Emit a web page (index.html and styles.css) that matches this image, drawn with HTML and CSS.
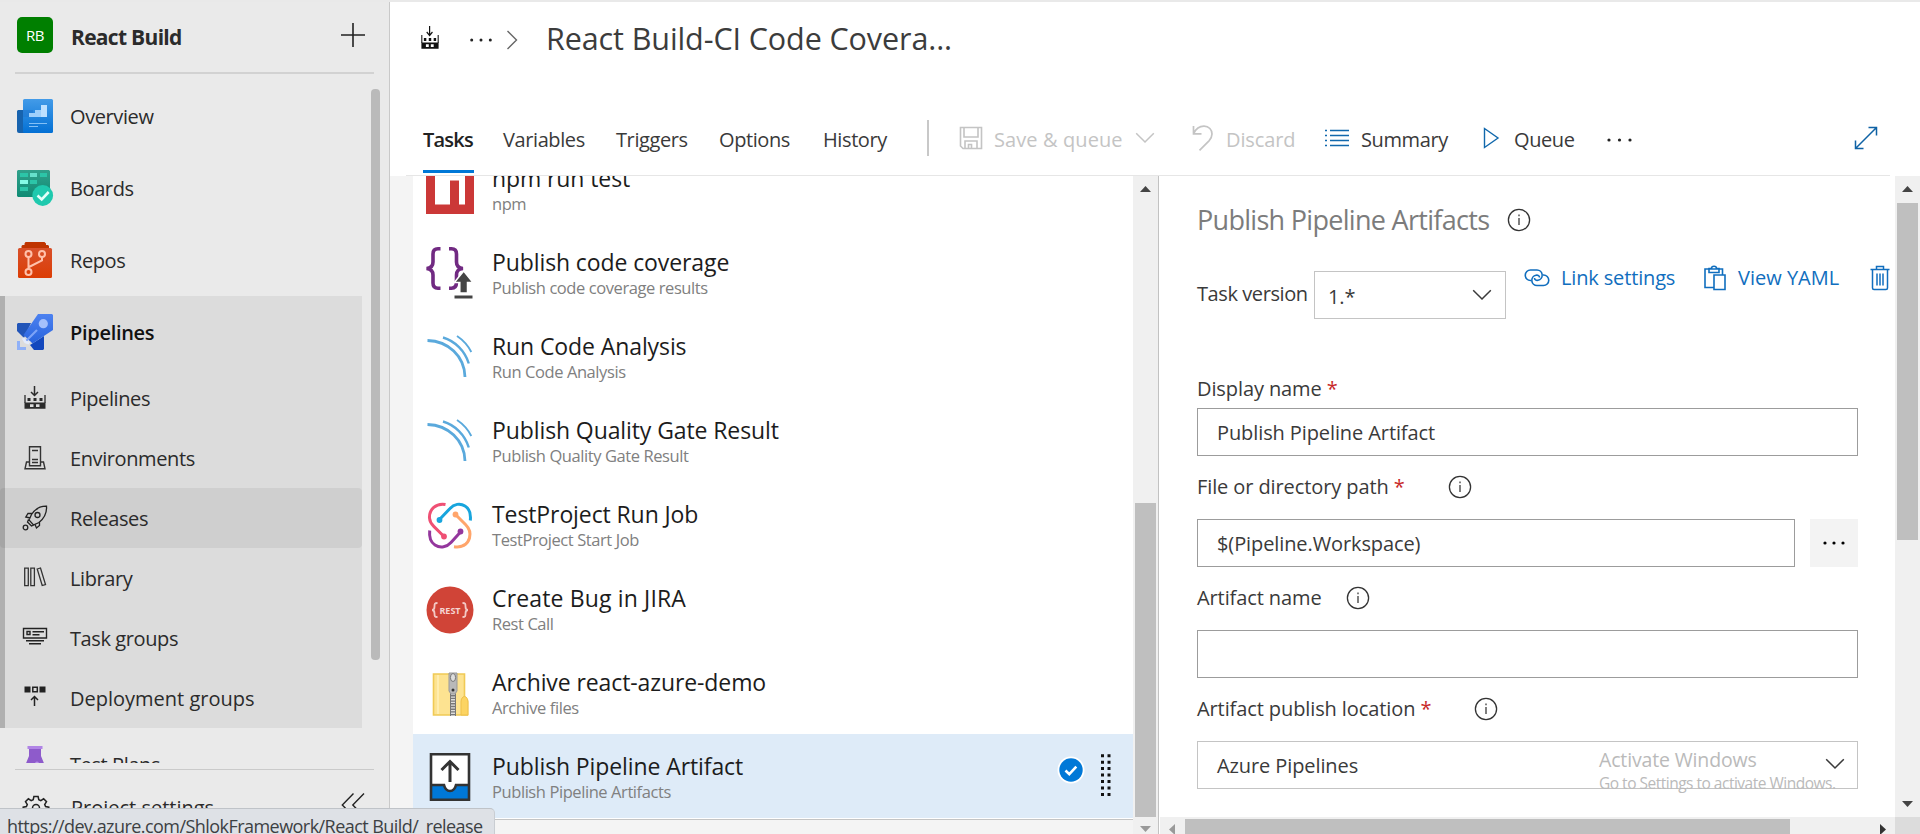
FILE: index.html
```html
<!DOCTYPE html>
<html lang="en">
<head>
<meta charset="utf-8">
<title>React Build - Pipelines</title>
<link rel="stylesheet" href="styles.css">
</head>
<body>
<svg class="defs" width="0" height="0">
  <symbol id="info" viewBox="0 0 24 24"><circle cx="12" cy="12" r="10.6" fill="none" stroke="#333" stroke-width="1.3"/><path d="M12 10v7M12 6.6v1.6" stroke="#555" stroke-width="1.5"/></symbol>
  <symbol id="chev" viewBox="0 0 20 12"><path d="M1.2 1.2 10 10l8.800-8.800" fill="none" stroke="currentColor" stroke-width="1.5"/></symbol>
  <symbol id="build" viewBox="0 0 24 24"><path d="M11.500 0v9M8 6l3.500 3.500L15 6" fill="none" stroke="currentColor" stroke-width="1.500"/><path d="M2 9v8M22 9v8" stroke="currentColor" stroke-width="1.300"/><path d="M4.500 12h3v3h-3zM10.500 12h3v3h-3zM16.500 12h3v3h-3z" fill="currentColor"/><path fill-rule="evenodd" d="M1.500 16.500h21v6.300h-21zM7 18.300v2.800h3.500v-2.800zM13 18.300v2.800h3.500v-2.800z" fill="currentColor"/></symbol>
  <symbol id="sonar" viewBox="0 0 48 48"><g fill="none" stroke="#5aa9dc"><path d="M1.500 6.500C22 7 38.500 22 39 43" stroke-width="2.800"/><path d="M17 3.500C29 7 39 17 42.800 29.500" stroke-width="2.400"/><path d="M31 2c6 4 11 9.500 14.300 16" stroke-width="1.900"/></g></symbol>
</svg>

<div class="app">
  <aside class="sidebar">
    <div class="project">
      <span class="avatar">RB</span>
      <span class="project-name">React Build</span>
      <svg class="plus" width="26" height="26" viewBox="0 0 26 26"><path d="M13 1v24M1 13h24" stroke="#222" stroke-width="1.600"/></svg>
    </div>
    <nav class="nav">
      <div class="nav-item">
        <svg width="36" height="36" viewBox="0 0 36 36"><defs><linearGradient id="ov" x2="0" y2="1"><stop stop-color="#439be8"/><stop offset="1" stop-color="#0370d4"/></linearGradient></defs><path d="M1 12h6v23H2a2 2 0 0 1-2-2V13z" fill="#1763ae"/><rect x="6" y="1" width="30" height="34" rx="1.500" fill="url(#ov)"/><path d="M6 12h10v7H6z" fill="#1f74cc" opacity=".5"/><path d="M12 15h6v-3h6V7h6v12H12z" fill="#9fd0fb"/><path d="M24 7h6v12h-6z" fill="#bfe1ff"/><path d="M12 25.500h18M12 28.500h9" stroke="#83c0f6"/></svg>
        <span>Overview</span>
      </div>
      <div class="nav-item">
        <svg width="36" height="36" viewBox="0 0 36 36"><defs><linearGradient id="bd" x2="0" y2="1"><stop stop-color="#31a18b"/><stop offset="1" stop-color="#0f8b74"/></linearGradient></defs><path d="M1 0h31l1 1v26H1l-1-1V1z" fill="url(#bd)"/><path d="M3 3h8v4H3zM23 3h7v4h-7zM13 10h7v4h-7zM3 17h8v4H3z" fill="#2cc5a8"/><path d="M13 3h7v4h-7z" fill="#66e0cb"/><path d="M3 10h8v4H3z" fill="#84fae5"/><circle cx="25.700" cy="25.500" r="10.400" fill="#1fc9ae"/><path d="M20.500 25.500l4.200 4 7-7.500" fill="none" stroke="#e2fffa" stroke-width="2.600"/></svg>
        <span>Boards</span>
      </div>
      <div class="nav-item">
        <svg width="36" height="36" viewBox="0 0 36 36"><path d="M8.500 0h19l1.500 1.500V3h2l1 1v3H4.500V4l1-1h2V1.500z" fill="#bf3400"/><defs><linearGradient id="rp" x2="0" y2="1"><stop stop-color="#d8502a"/><stop offset="1" stop-color="#dc3d05"/></linearGradient></defs><rect x="1" y="6" width="34" height="30" rx="1.500" fill="url(#rp)"/><g fill="none" stroke="#ffc1ab" stroke-width="2"><circle cx="11.500" cy="12" r="3"/><circle cx="25" cy="12" r="3"/><circle cx="11.500" cy="30" r="3"/><path d="M11.500 15v12M25 15v3.500l-13 6.500"/></g></svg>
        <span>Repos</span>
      </div>
      <div class="nav-group">
        <div class="nav-item current">
          <svg width="36" height="36" viewBox="0 0 36 36"><path d="M1 9h13L7 24 0 17V10z" fill="#2255b8"/><path d="M13 31l14-9v13l-1 1h-9z" fill="#1348bd"/><defs><linearGradient id="pp" x2="0" y2="1"><stop stop-color="#4d82f0"/><stop offset="1" stop-color="#2863dd"/></linearGradient></defs><path d="M21 0h14l1 1v15L15.500 29.500 6.500 21z" fill="url(#pp)"/><circle cx="26.300" cy="9.700" r="4.600" fill="#a5c0fb"/><path d="M20 16 8 28" stroke="#7da3f7" stroke-width="2.200"/><path d="M7 23l2.500 4 4 .5-2 3-4-1.500L5 25z" fill="#e3ebfc"/><path d="M0 27h3v6h6v3H0z" fill="#8fb0f7"/></svg>
          <span>Pipelines</span>
        </div>
        <div class="sub-item"><svg width="24" height="24"><use href="#build"/></svg><span>Pipelines</span></div>
        <div class="sub-item"><svg width="24" height="24" viewBox="0 0 24 24" fill="none" stroke="#333" stroke-width="1.400"><path d="M6.500.8h11v19h-11zM9 4.500h6M9 13.500h6M9 16.500h6M6.500 16H3.500L2 22.800h20L20.500 16h-3"/></svg><span>Environments</span></div>
        <div class="sub-item hovered"><svg width="26" height="26" viewBox="0 0 26 26" fill="none" stroke="#222" stroke-width="1.300"><path d="M24.500 1.200C17 1 12.500 5 9.500 9.500L7 15l4.500 5 5.500-2.500C22 13.500 25 8.500 24.500 1.200zM10.500 8.500H6L3.800 12l4.500 1M17.500 16.500v4L14.500 23l-1.800-4.300M6.500 14.500l-1 2.500 4 4 2.500-1"/><circle cx="15.500" cy="10" r="2.500"/><circle cx="3.500" cy="22.500" r="2.300"/></svg><span>Releases</span></div>
        <div class="sub-item"><svg width="24" height="24" viewBox="0 0 24 24" fill="none" stroke="#333" stroke-width="1.300"><path d="M1.700 2.200h3.600v17.500H1.700zM7.800 2.200h3.600v17.500H7.800zM14.200 3l3.300-1 5 16.500-3.300 1z"/></svg><span>Library</span></div>
        <div class="sub-item"><svg width="26" height="24" viewBox="0 0 26 24" fill="none" stroke="#222" stroke-width="1.400"><path d="M1.500 2.500h23v9.500h-23zM5 5.500h3v3H5zM10.500 5.700h11.500M10.500 8.700h7M4 14.700h18M7 17.700h12"/></svg><span>Task groups</span></div>
        <div class="sub-item"><svg width="24" height="24" viewBox="0 0 24 24"><path d="M1.500.500h6v6h-6zM16.500.500h6v6h-6z" fill="#222"/><path d="M9.800 1.300h4.500v4.500H9.800zM11.500 20V10.500M8 14l3.500-3.500L15 14" fill="none" stroke="#222" stroke-width="1.500"/></svg><span class="loose">Deployment groups</span></div>
      </div>
      <div class="nav-item">
        <svg width="36" height="36" viewBox="0 0 36 36"><path d="M12 3h12v7l9 22-2 4H5l-2-4 9-22z" fill="#8e5bcb"/><path d="M10.500 0h15v3h-15z" fill="#b185e6"/><circle cx="20" cy="17.500" r="2" fill="#b991ea"/></svg>
        <span>Test Plans</span>
      </div>
    </nav>
    <div class="nav-footer">
      <svg width="26" height="26" viewBox="0 0 26 26" fill="none" stroke="#222" stroke-width="1.500"><path d="M10.900 1.500h4.200l.7 3.200 2 .9 2.800-1.800 2.900 2.900-1.800 2.800.9 2 3.200.7v4.200l-3.200.7-.9 2 1.800 2.800-2.900 2.900-2.800-1.800-2 .9-.7 3.200h-4.200l-.7-3.200-2-.9-2.800 1.800-2.900-2.900 1.800-2.800-.9-2-3.200-.7v-4.200l3.200-.7.900-2-1.800-2.800 2.900-2.900 2.800 1.800 2-.9z"/><circle cx="13" cy="13" r="3.500"/></svg>
      <span>Project settings</span>
      <svg class="collapse" width="24" height="24" viewBox="0 0 24 24" fill="none" stroke="#222" stroke-width="1.400"><path d="M12.500.5 1.300 12l11.200 11.500M23 .5 11.800 12 23 23.500"/></svg>
    </div>
    <div class="sidebar-thumb"></div>
  </aside>

  <main class="main">
    <header class="crumbs">
      <svg class="crumb-icon" width="18" height="24" viewBox="1 0 22 24" preserveAspectRatio="none"><use href="#build" width="24" height="24"/></svg>
      <svg class="crumb-dots" width="22" height="4" viewBox="0 0 22 4" fill="#222"><circle cx="1.700" cy="2" r="1.500"/><circle cx="11" cy="2" r="1.500"/><circle cx="20.300" cy="2" r="1.500"/></svg>
      <svg class="crumb-chev" width="12" height="20" viewBox="0 0 12 20"><path d="M1.500 1l9 9-9 9" fill="none" stroke="#666" stroke-width="1.400"/></svg>
      <h1>React Build-CI Code Covera...</h1>
    </header>

    <div class="toolbar">
      <div class="tabs">
        <span class="tab active">Tasks</span><span class="tab">Variables</span><span class="tab">Triggers</span><span class="tab">Options</span><span class="tab">History</span>
      </div>
      <div class="actions">
        <div class="action save disabled">
          <svg width="24" height="24" viewBox="0 0 24 24" fill="none" stroke="#c4c4c4" stroke-width="1.600"><path d="M1.500 1.500h21v21H4l-2.500-2.500zM5 1.500v9.500h14V1.500M6 22.500V15h12v7.500M9.500 22.500v-4h3v4"/></svg>
          <span>Save &amp; queue</span>
          <svg class="drop" width="20" height="12"><use href="#chev"/></svg>
        </div>
        <div class="action discard disabled">
          <svg width="22" height="26" viewBox="0 0 22 26" fill="none" stroke="#c4c4c4" stroke-width="1.700"><path d="M1.500 1v7.800h8M1.800 8.500C4 3.500 8 1.200 12 1.200c5 0 8 3.600 8 7.800 0 3-1.300 5-3 6.800l-9.500 9.500"/></svg>
          <span>Discard</span>
        </div>
        <div class="action summary">
          <svg width="26" height="20" viewBox="0 0 26 20"><path d="M6 2.500h19M6 7.500h19M6 12.500h19M6 17.500h19" stroke="#1168ac" stroke-width="1.700"/><path d="M1 2.500h2M1 7.500h2M1 12.500h2M1 17.500h2" stroke="#1168ac" stroke-width="1.500"/></svg>
          <span>Summary</span>
        </div>
        <div class="action queue">
          <svg width="18" height="22" viewBox="0 0 18 22"><path d="M1.500 1.500 15 11 1.500 20.500z" fill="none" stroke="#1168ac" stroke-width="1.400"/></svg>
          <span>Queue</span>
        </div>
        <svg class="more" width="26" height="4" viewBox="0 0 26 4" fill="#222"><circle cx="2" cy="2" r="1.600"/><circle cx="12.500" cy="2" r="1.600"/><circle cx="23" cy="2" r="1.600"/></svg>
        <svg class="expand" width="24" height="24" viewBox="0 0 24 24" fill="none" stroke="#0f62a5" stroke-width="1.500"><path d="M2 22 22 2M14.500 1.500h8v8M1.500 14.500v8h8"/></svg>
      </div>
    </div>

    <div class="work">
      <section class="tasks">
        <div class="task-scroll">
          <div class="task"><svg width="48" height="48" viewBox="0 0 48 48"><path d="M0 0h48v48H0z" fill="#cb3837"/><path d="M9 9h30v29.500h-6V14.500h-9v24H9z" fill="#fff"/></svg><div><b>npm run test</b><small>npm</small></div></div>
          <div class="task"><svg width="48" height="54" viewBox="0 0 48 54"><g fill="none" stroke="#712a82" stroke-width="3.600"><path d="M14.500 1.800H12C8 1.800 7 4 7 7v8c0 4-2 6.200-6.500 6.500C5 22 7 24 7 28v8c0 3 1 5.200 5 5.200h2.500M23 1.800h2.500c4 0 5 2.200 5 5.200v8c0 4 2 6.200 6.500 6.500C32 22 30.500 24 30.500 28v7c0 4-1.500 6.200-5 6.200H23"/></g><path d="M37.700 24 47 35.500h-5.500V46h-7.700V35.500h-5.500z" fill="#444" stroke="#fff" stroke-width="1.500"/><path d="M28.500 48.500h18v3h-18z" fill="#444"/></svg><div><b>Publish code coverage</b><small>Publish code coverage results</small></div></div>
          <div class="task"><svg width="48" height="48"><use href="#sonar"/></svg><div><b>Run Code Analysis</b><small>Run Code Analysis</small></div></div>
          <div class="task"><svg width="48" height="48"><use href="#sonar"/></svg><div><b>Publish Quality Gate Result</b><small>Publish Quality Gate Result</small></div></div>
          <div class="task"><svg width="48" height="48" viewBox="0 0 48 48" fill="none" stroke-width="3"><path d="M19.500 2.500C10 .8 3 7.500 3.500 16c.3 4 2 6.300 4.500 8.700L18 34.500" stroke="#ef5074"/><path d="M13.500 17.500 24 6.500C28 2 34 .8 39 4c5 3 6 8 5.300 14.500" stroke="#18a5dd"/><path d="M29.500 12.500l10 10c3.500 3.500 5.500 8 4 13.500-2 7-8 9.800-15.500 8.700" stroke="#ffa56b"/><path d="M35 29.500 25 40.500C21 45 14.500 46.500 9 43c-5-3.300-6-8-5.300-14.500" stroke="#94379d"/><circle cx="13.500" cy="18" r="2.900" fill="#18a5dd"/><circle cx="29.500" cy="12.500" r="2.900" fill="#ffa56b"/><circle cx="18" cy="34.500" r="2.900" fill="#ef5074"/><circle cx="34.500" cy="29.500" r="2.900" fill="#94379d"/></svg><div><b>TestProject Run Job</b><small>TestProject Start Job</small></div></div>
          <div class="task"><svg width="48" height="48" viewBox="0 0 48 48"><circle cx="24" cy="24" r="23.500" fill="#d04437"/><path d="M11.500 17c-3 0-3 1-3 3.500 0 2-.5 3.500-2.500 3.500 2 0 2.500 1.500 2.500 3.500 0 2.500 0 3.500 3 3.500M36.500 17c3 0 3 1 3 3.500 0 2 .5 3.500 2.500 3.500-2 0-2.500 1.500-2.500 3.500 0 2.500 0 3.500-3 3.500" fill="none" stroke="#f3c9c5" stroke-width="1.800"/><text x="24" y="28" class="rest" text-anchor="middle">REST</text></svg><div><b class="wide">Create Bug in JIRA</b><small>Rest Call</small></div></div>
          <div class="task"><svg width="48" height="48" viewBox="0 0 48 48"><path d="M7.500 4h31v23l3 4v14H7.500z" fill="#fde391" stroke="#f0ca55" stroke-width="1.600"/><path d="M12 5v39" stroke="#fff0b8" stroke-width="1.500"/><path d="M35 45V32c0-3 1.500-5.500 3.500-5.500S42 29 42 32v13z" fill="#fcd462" stroke="#eec04a"/><path d="M27 21v25" stroke="#777" stroke-width="6"/><path d="M27 21v25" stroke="#ddd" stroke-width="4" stroke-dasharray="1.300 1.400"/><path d="M23 3h8v18l-2 3h-4l-2-3z" fill="#b9b9b9" stroke="#999"/><ellipse cx="27" cy="7.500" rx="2.600" ry="4" fill="#ddd" stroke="#777"/><circle cx="27" cy="20" r="1.500" fill="#333"/></svg><div><b>Archive react-azure-demo</b><small>Archive files</small></div></div>
          <div class="task selected">
            <svg width="48" height="48" viewBox="0 0 48 48"><path d="M5 1h38v46H5z" fill="#fff"/><path d="M5 32h13c1 4 3.500 6 6 6s5-2 6-6h13v15H5z" fill="#0078d7"/><path d="M5 1.300h38v45.500H5zM5 32h13c1 4 3.500 6 6 6s5-2 6-6h13" fill="none" stroke="#333" stroke-width="2.600"/><path d="M24 29V9M15.500 17 24 8.500 32.500 17" fill="none" stroke="#333" stroke-width="3"/></svg>
            <div><b>Publish Pipeline Artifact</b><small>Publish Pipeline Artifacts</small></div>
            <svg class="check" width="28" height="28" viewBox="0 0 28 28"><circle cx="14" cy="14" r="13.500" fill="#fff"/><circle cx="14" cy="14" r="11.700" fill="#0078d7"/><path d="M8.500 14.500l3.800 3.700 7-7.500" fill="none" stroke="#fff" stroke-width="2.600"/></svg>
            <svg class="grip" width="12" height="44" viewBox="0 0 12 44"><path d="M2.500 1.200V44M9 1.200V44" stroke="#111" stroke-width="3" stroke-dasharray="3 3.450"/></svg>
          </div>
        </div>
        <div class="vbar">
          <svg width="11" height="6" viewBox="0 0 11 6"><path d="M0 6 5.500 0 11 6z" fill="#444"/></svg>
          <div class="thumb low"></div>
          <svg width="11" height="6" viewBox="0 0 11 6"><path d="M0 0h11L5.500 6z" fill="#999"/></svg>
        </div>
      </section>

      <section class="details">
        <div class="form">
          <h2>Publish Pipeline Artifacts<svg width="24" height="24"><use href="#info"/></svg></h2>
          <div class="version">
            <label>Task version</label>
            <div class="select small"><span>1.*</span><svg width="20" height="12"><use href="#chev"/></svg></div>
            <a class="link l1"><svg width="26" height="20" viewBox="0 0 26 20" fill="none" stroke="currentColor" stroke-width="1.600"><path d="M7 12.500H6.500a5.200 5.200 0 0 1 0-10.500H13a5.200 5.200 0 0 1 1 10.300c-2 .4-3.500-.6-3.500-2.300M19 7h.5a5.200 5.200 0 0 1 0 10.500H13A5.200 5.200 0 0 1 12 7.200c2-.4 3.500.6 3.500 2.300"/></svg><span>Link settings</span></a>
            <a class="link l2"><svg width="22" height="26" viewBox="0 0 22 26" fill="none" stroke="currentColor" stroke-width="1.600"><path d="M10 22.500H1V4h17.500v6M10 10h11v14.500H10zM5 3.500h2.500c0-3 5-3 5 0H15v4H5z"/></svg><span>View YAML</span></a>
            <a class="link l3"><svg width="20" height="26" viewBox="0 0 20 26" fill="none" stroke="currentColor" stroke-width="1.500"><path d="M.5 4.500h19M2.500 4.500V23q0 1.500 1.500 1.500h12q1.500 0 1.500-1.500V4.500M6.500 4.500V1.500h7v3M7 8.500v12M10 8.500v12M13 8.500v12"/></svg></a>
          </div>
          <div class="label first"><span>Display name <i>*</i></span></div>
          <div class="input">Publish Pipeline Artifact</div>
          <div class="label"><span>File or directory path <i>*</i></span><svg class="far" width="24" height="24"><use href="#info"/></svg></div>
          <div class="pair"><div class="input">$(Pipeline.Workspace)</div><div class="browse"><svg width="24" height="4" viewBox="0 0 24 4"><circle cx="3" cy="2" r="1.600"/><circle cx="12" cy="2" r="1.600"/><circle cx="21" cy="2" r="1.600"/></svg></div></div>
          <div class="label"><span>Artifact name</span><svg class="near" width="24" height="24"><use href="#info"/></svg></div>
          <div class="input"></div>
          <div class="label"><span>Artifact publish location <i>*</i></span><svg class="far" width="24" height="24"><use href="#info"/></svg></div>
          <div class="select"><span>Azure Pipelines</span><svg width="20" height="12"><use href="#chev"/></svg></div>
        </div>
        <div class="vbar right">
          <svg width="11" height="6" viewBox="0 0 11 6"><path d="M0 6 5.500 0 11 6z" fill="#444"/></svg>
          <div class="thumb high"></div>
          <svg width="11" height="6" viewBox="0 0 11 6"><path d="M0 0h11L5.500 6z" fill="#444"/></svg>
        </div>
        <div class="hbar">
          <svg width="6" height="11" viewBox="0 0 6 11"><path d="M6 0v11L0 5.500z" fill="#999"/></svg>
          <div class="hthumb"></div>
          <svg width="6" height="11" viewBox="0 0 6 11"><path d="M0 0v11l6-5.500z" fill="#333"/></svg>
        </div>
        <div class="corner"></div>
      </section>
    </div>
  </main>
</div>
<div class="watermark"><p>Activate Windows</p><small>Go to Settings to activate Windows.</small></div>
<div class="status">https://dev.azure.com/ShlokFramework/React Build/_release</div>
</body>
</html>
```

FILE: styles.css
```css
* { box-sizing: border-box; }
body {
  margin: 0;
  width: 1920px;
  height: 834px;
  overflow: hidden;
  font-family: "Open Sans", "Noto Sans", sans-serif;
  font-size: 20px;
  letter-spacing: -0.4px;
  line-height: 28px;
  color: #3a3a3a;
  white-space: nowrap;
}
svg { display: block; flex: none; overflow: visible; }
.defs { position: absolute; }
.app { display: flex; height: 834px; border-top: 2px solid #e9e9e9; }

/* Sidebar */
.sidebar {
  position: relative;
  width: 390px;
  flex: none;
  background: #eaeaea;
  border-right: 1px solid #c9c9c9;
  color: #2b2b2b;
  overflow: hidden;
}
.project {
  display: flex;
  align-items: center;
  height: 72px;
  margin: 0 15px;
  padding: 0 8px 4px 2px;
  border-bottom: 2px solid #d2d2d2;
}
.avatar {
  width: 36px;
  height: 36px;
  border-radius: 5px;
  background: #007f00;
  color: #fff;
  font-size: 15px;
  line-height: 36px;
  text-align: center;
}
.project-name { margin-left: 18px; padding-top: 3px; font-size: 21px; font-weight: 700; letter-spacing: -0.7px; }
.plus { margin-left: auto; }
.nav { height: 689px; padding-top: 6px; overflow: hidden; }
.nav-item { display: flex; align-items: center; gap: 18px; height: 72px; padding-left: 17px; }
.nav-item span, .sub-item span { padding-top: 2px; margin-left: -1px; }
.nav-group { position: relative; width: 362px; background: #dcdcdc; }
.nav-group::before {
  content: "";
  position: absolute;
  inset: 0 auto 0 0;
  width: 5px;
  background: rgba(0, 0, 0, 0.2);
}
.nav-item.current span { font-weight: 600; letter-spacing: -0.3px; color: #111; }
.sub-item { display: grid; grid-template-columns: 36px auto; gap: 18px; align-items: center; justify-content: start; height: 60px; padding-left: 17px; }
.sub-item svg { justify-self: center; }
.loose { letter-spacing: 0; }
.hovered { background: #cfcfcf; border-radius: 4px; }
.nav-footer {
  display: flex;
  align-items: center;
  margin: 6px 15px 0;
  height: 76px;
  padding: 0 9px 0 8px;
  border-top: 1px solid #cacaca;
}
.nav-footer span { margin-left: 22px; letter-spacing: 0; }
.collapse { margin: -6px 0 0 auto; }
.sidebar-thumb { position: absolute; left: 371px; top: 87px; width: 9px; height: 571px; border-radius: 4px; background: #bababa; }

/* Header */
.main { display: flex; flex-direction: column; flex: 1; min-width: 0; }
.crumbs { display: flex; align-items: center; height: 74px; padding: 0 0 2px 31px; color: #111; }
.crumb-icon { margin-right: 31px; }
.crumb-dots { margin: 3px 14px 0 0; }
.crumb-chev { margin-top: 3px; }
h1 { margin: 0 0 0 28px; font-size: 30.5px; font-weight: 400; letter-spacing: -0.1px; line-height: 40px; color: #3c3c3c; }
.toolbar { display: flex; height: 100px; margin: 0 30px 0 16px; padding-top: 36px; border-bottom: 1px solid #e6e6e6; }
.tabs { display: grid; grid-template-columns: 80px 113px 103px 104px 104px; height: 61px; padding-left: 17px; }
.tab { padding-top: 14px; justify-self: start; }
.active { border-bottom: 3px solid #0078d7; font-weight: 600; letter-spacing: -0.8px; padding-right: 1px; color: #222; }
.actions { position: relative; display: flex; align-items: center; flex: 1; height: 36px; margin-top: 8px; border-left: 2px solid #c8c8c8; }
.action { display: flex; align-items: center; }
.action span { padding-top: 4px; }
.disabled { color: #c4c4c4; }
.save { margin-left: 30px; width: 233px; letter-spacing: 0.1px; }
.save span { margin-left: 11px; width: 142px; }
.save .drop { margin-left: -1px; }
.discard { width: 132px; letter-spacing: -0.1px; }
.discard span { margin-left: 12px; }
.summary { width: 159px; }
.summary span { margin-left: 11px; }
.queue { width: 124px; }
.queue span { margin-left: 13px; }
.more { margin-top: 4px; }
.expand { margin-left: auto; margin-right: 12px; }

/* Task list */
.work { display: flex; flex: 1; min-height: 0; background: #f4f4f4; }
.tasks, .details { min-height: 0; }
.tasks { display: flex; width: 769px; border-right: 1px solid #c2c2c2; padding-left: 23px; }
.task-scroll { display: flex; flex-direction: column; justify-content: flex-end; width: 720px; height: 644px; overflow: hidden; background: #fff; border-bottom: 1px solid #c4c4c4; padding-bottom: 1px; }
.task { display: flex; align-items: center; height: 84px; flex: none; padding-left: 13px; }
.task > svg:first-child { margin-top: 3px; }
.task div { margin-left: 18px; padding-top: 1px; flex: 1; }
.task b { display: block; font-size: 23px; font-weight: 400; letter-spacing: -0.1px; line-height: 30px; color: #1c1c1c; }
.task b.wide { letter-spacing: 0.15px; }
.task small { display: block; font-size: 16.5px; letter-spacing: -0.42px; line-height: 22px; color: #808080; }
.selected { background: #deebf8; }
.task.selected > svg:first-child { margin-top: 2px; }
.check { margin-right: 15px; margin-top: -12px; }
.grip { margin-right: 21px; margin-top: -2px; }
.rest { font: 700 9px "Open Sans", sans-serif; fill: #f5d5d2; letter-spacing: 0; }

/* Scroll bars */
.vbar { display: flex; flex-direction: column; align-items: center; width: 25px; background: #f0f0f0; padding-top: 10px; }
.thumb { width: 21px; background: #bfbfbf; }
.low { height: 314px; margin: 311px 0 9px; }
.high { height: 337px; margin: 11px 0 261px; }
.right { grid-area: 1 / 2; }
.hbar { grid-area: 2 / 1; display: flex; align-items: flex-start; background: #f0f0f0; margin-left: 1px; padding: 2px 0 0 9px; }
.hbar svg { margin-top: 5px; }
.hthumb { width: 605px; height: 15px; margin: 0 90px 0 10px; background: #bfbfbf; }
.corner { background: #dcdcdc; }

/* Detail form */
.details { display: grid; grid-template: 641px 17px / 736px 25px; background: #fff; }
.form { padding: 24px 37px 0 38px; overflow: hidden; letter-spacing: -0.1px; }
h2 { display: flex; align-items: center; gap: 18px; margin: 0; height: 40px; font-size: 27px; font-weight: 400; letter-spacing: -0.7px; color: #7c7c7c; }
.version { display: flex; align-items: flex-start; width: 700px; height: 144px; padding-top: 31px; }
.version label { width: 117px; padding-top: 9px; letter-spacing: -0.42px; }
.select { display: flex; align-items: center; justify-content: space-between; height: 48px; padding: 2px 12px 0 19px; border: 1px solid #c4c4c4; }
.select svg { margin-top: -4px; }
.small { width: 192px; padding: 3px 13px 0 13px; }
.link { display: flex; align-items: center; height: 26px; margin-top: -6px; color: #106ebe; }
.l1 { margin-left: 18px; width: 180px; letter-spacing: -0.15px; }
.l1 span { margin-left: 11px; }
.l2 { width: 166px; letter-spacing: 0; }
.l2 span { margin-left: 12px; }
.label { display: flex; align-items: center; height: 63px; }
.label span { margin-top: -2px; }
.label.first { height: 24px; padding-bottom: 12px; }
.label i { color: #c8292a; font-style: normal; }
.far { margin-left: 43px; margin-top: -1px; }
.near { margin-left: 24px; margin-top: -1px; }
.input { height: 48px; padding: 10px 19px; border: 1px solid #9c9c9c; flex: 1; line-height: 28px; }
.pair { display: flex; gap: 15px; }
.browse { display: grid; place-items: center; width: 48px; height: 48px; background: #f3f3f3; }

/* Overlays */
.watermark { position: absolute; left: 1599px; top: 746px; color: #bababa; }
.watermark p { margin: 0; font-size: 19.5px; letter-spacing: -0.15px; line-height: 28px; }
.watermark small { display: block; font-size: 15.5px; letter-spacing: -0.5px; line-height: 18px; }
.status {
  position: absolute;
  left: 0;
  top: 808px;
  width: 495px;
  height: 30px;
  padding: 3px 0 0 7px;
  border-top: 1px solid #bfc3c8;
  border-right: 1px solid #c9cdd2;
  border-top-right-radius: 5px;
  background: #dee1e6;
  color: #3c4043;
  font-size: 18px;
  letter-spacing: -0.55px;
}
```
